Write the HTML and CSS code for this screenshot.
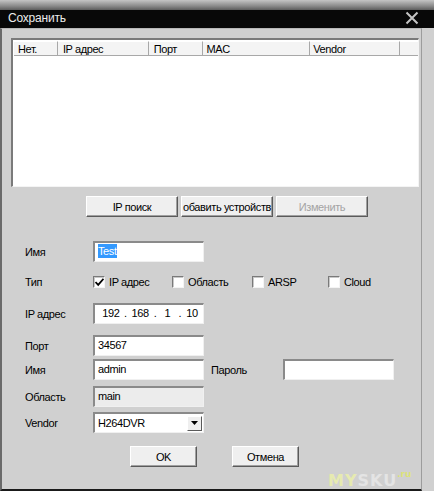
FILE: index.html
```html
<!DOCTYPE html>
<html lang="ru">
<head>
<meta charset="utf-8">
<title>Сохранить</title>
<link rel="stylesheet" href="styles.css">
</head>
<body>
<div class="screen">
  <div class="frame-top"></div>
  <div class="titlebar">
    <span class="title">Сохранить</span>
    <svg class="close" width="14" height="14" viewBox="0 0 14 14" aria-hidden="true">
      <path d="M1.5 1.5 L12.5 12.5 M12.5 1.5 L1.5 12.5" stroke="#c4c4c4" stroke-width="2" fill="none"/>
    </svg>
  </div>
  <div class="dialog">
    <div class="listbox">
      <div class="list-head">
        <div class="col c-num">Нет.</div>
        <div class="col c-ip">IP адрес</div>
        <div class="col c-port">Порт</div>
        <div class="col c-mac">MAC</div>
        <div class="col c-vendor">Vendor</div>
        <div class="col c-rest"></div>
      </div>
    </div>

    <div class="btn-row">
      <button class="btn w-wide">IP поиск</button>
      <button class="btn w-wide">обавить устройств</button>
      <button class="btn w-wide" disabled>Изменить</button>
    </div>

    <div class="form">
      <div class="row r-name">
        <label class="lbl">Имя</label>
        <div class="field"><span class="sel">Test</span></div>
      </div>
      <div class="row r-type">
        <label class="lbl">Тип</label>
        <div class="checks">
          <span class="chk-item c1"><span class="box checked"><svg width="9" height="9" viewBox="0 0 9 9"><path d="M0.5 4 L3.2 6.8 L8.5 0.8" stroke="#000" stroke-width="1.8" fill="none"/></svg></span>IP адрес</span>
          <span class="chk-item c2"><span class="box"></span>Область</span>
          <span class="chk-item c3"><span class="box"></span>ARSP</span>
          <span class="chk-item c4"><span class="box"></span>Cloud</span>
        </div>
      </div>
      <div class="row r-ip">
        <label class="lbl">IP адрес</label>
        <div class="field ip">
          <span class="oct">192</span><span class="dot">.</span><span class="oct">168</span><span class="dot">.</span><span class="oct">1</span><span class="dot">.</span><span class="oct">10</span>
        </div>
      </div>
      <div class="row r-port">
        <label class="lbl">Порт</label>
        <div class="field">34567</div>
      </div>
      <div class="row r-user">
        <label class="lbl">Имя</label>
        <div class="field">admin</div>
        <label class="lbl lbl-pass">Пароль</label>
        <div class="field"></div>
      </div>
      <div class="row r-area">
        <label class="lbl">Область</label>
        <div class="field disabled">main</div>
      </div>
      <div class="row r-vendor">
        <label class="lbl">Vendor</label>
        <div class="field combo">
          <span class="combo-text">H264DVR</span>
          <span class="combo-btn"><svg width="7" height="4" viewBox="0 0 7 4"><path d="M0 0 H7 L3.5 4 Z" fill="#000"/></svg></span>
        </div>
      </div>
    </div>

    <div class="btn-row bottom">
      <button class="btn w-ok">OK</button>
      <button class="btn w-ok">Отмена</button>
    </div>

    <div class="watermark"><span class="wm-my">MY</span>SKU<span class="wm-ru">.ru</span></div>
  </div>
</div>
</body>
</html>
```
FILE: styles.css
```css
* { box-sizing: border-box; }

html, body {
  margin: 0;
  padding: 0;
  background: #d0d0d0;
}

body {
  font-family: "Liberation Sans", Arial, sans-serif;
  font-size: 11px;
  letter-spacing: -0.4px;
  color: #000;
}

.screen {
  width: 434px;
  height: 491px;
  overflow: hidden;
  position: relative;
  background: #d0d0d0;
}

/* window chrome */
.frame-top {
  height: 10px;
  background: linear-gradient(#c4c4c4, #8a8a8a 60%, #5c5c5c);
}

.titlebar {
  height: 18px;
  background: #080808;
  display: flex;
  align-items: center;
  justify-content: space-between;
  padding: 0 15px 0 8px;
}

.title {
  color: #ececec;
  font-size: 12px;
  letter-spacing: -0.2px;
  line-height: 1;
  margin-top: -2px;
}

.close {
  margin-top: -3px;
}

.dialog {
  position: relative;
  width: 422px;
  height: 463px;
  border-left: 2px solid #6a6a6a;
  border-right: 1px solid #9c9c9c;
  border-bottom: 2px solid #1a1a1a;
  border-top: 1px solid #b8b8b8;
  padding: 9px 0 0 9px;
}

/* device list */
.listbox {
  width: 408px;
  height: 149px;
  background: #fff;
  border-top: 2px solid #7a7a7a;
  border-left: 2px solid #7a7a7a;
  border-right: 1px solid #f4f4f4;
  border-bottom: 1px solid #f4f4f4;
  padding: 1px 0 0 1px;
}

.list-head {
  display: flex;
  height: 15px;
}

.col {
  height: 15px;
  line-height: 14px;
  padding-left: 4px;
  background: #f4f4f4;
  border-right: 1px solid #a8a8a8;
  border-bottom: 1px solid #a8a8a8;
  border-top: 1px solid #fff;
  white-space: nowrap;
  overflow: hidden;
}

.c-num { width: 44px; }
.c-ip { width: 91px; padding-left: 5px; }
.c-port { width: 54px; padding-left: 5px; }
.c-mac { width: 108px; padding-left: 4px; }
.c-vendor { width: 90px; padding-left: 3px; }
.c-rest { width: 18px; border-right: none; }

/* buttons */
.btn-row {
  display: flex;
  gap: 3px;
  margin: 9px 0 0 75px;
}

.btn {
  height: 21px;
  font-family: inherit;
  font-size: 11px;
  letter-spacing: -0.4px;
  color: #000;
  background: #efefef;
  border: 1px solid;
  border-color: #fff #5a5a5a #5a5a5a #fff;
  box-shadow: inset -1px -1px 0 #a0a0a0;
  padding: 0;
  white-space: nowrap;
  overflow: hidden;
}

.btn:disabled {
  color: #a4a4a4;
}

.w-wide { width: 92px; }
.w-ok { width: 67px; }

.btn-row.bottom {
  gap: 35px;
  margin: 13px 0 0 119px;
}

/* form */
.form {
  display: flex;
  flex-direction: column;
  margin-top: 24px;
}

.row {
  display: flex;
  align-items: center;
  height: 21px;
}

.lbl {
  width: 82px;
  padding-left: 14px;
  flex: none;
}

.lbl-pass {
  width: 79px;
  padding-left: 7px;
}

.field {
  width: 111px;
  height: 21px;
  flex: none;
  background: #fff;
  border-top: 2px solid #8a8a8a;
  border-left: 2px solid #8a8a8a;
  border-right: 1px solid #f0f0f0;
  border-bottom: 1px solid #f0f0f0;
  padding: 0 3px;
  line-height: 17px;
  font-size: 11px;
  white-space: nowrap;
  overflow: hidden;
}

.field.disabled {
  background: #ececec;
}

.sel {
  background: #3399ff;
  color: #fff;
  padding: 1px 0;
}

.r-type { margin-top: 13px; height: 14px; }
.r-ip { margin-top: 14px; }
.r-port { margin-top: 11px; }
.r-user { margin-top: 3px; }
.r-area { margin-top: 6px; }
.r-vendor { margin-top: 5px; }

.checks {
  display: flex;
  align-items: center;
}

.chk-item {
  display: flex;
  align-items: center;
  gap: 4px;
  white-space: nowrap;
}

.c1 { width: 79px; }
.c2 { width: 80px; }
.c3 { width: 76px; }

.box {
  width: 12px;
  height: 12px;
  background: #fff;
  border-top: 1px solid #7a7a7a;
  border-left: 1px solid #7a7a7a;
  border-right: 1px solid #f4f4f4;
  border-bottom: 1px solid #f4f4f4;
  box-shadow: inset 1px 1px 0 #c8c8c8;
  display: flex;
  align-items: center;
  justify-content: center;
}

.ip {
  display: flex;
  padding-left: 6px;
}

.oct { display: inline-block; text-align: center; }
.oct:nth-child(1) { width: 20px; }
.oct:nth-child(3) { width: 21px; }
.oct:nth-child(5) { width: 16px; }
.oct:nth-child(7) { width: 16px; }
.dot { display: inline-block; width: 9px; text-align: center; }

.combo {
  display: flex;
  justify-content: space-between;
  align-items: center;
  padding-right: 1px;
}

.combo-btn {
  width: 15px;
  height: 15px;
  background: #efefef;
  border: 1px solid;
  border-color: #fff #5a5a5a #5a5a5a #fff;
  display: flex;
  align-items: center;
  justify-content: center;
}

/* site mark in the corner */
.watermark {
  position: absolute;
  left: 326px;
  top: 442px;
  font-family: "DejaVu Sans", sans-serif;
  font-weight: bold;
  font-size: 16px;
  letter-spacing: 1px;
  color: #e4e4e4;
}

.wm-my { color: #e6eab0; }

.wm-ru {
  position: relative;
  top: -9px;
  font-size: 9px;
  color: #dce27a;
  letter-spacing: 0;
}
```
